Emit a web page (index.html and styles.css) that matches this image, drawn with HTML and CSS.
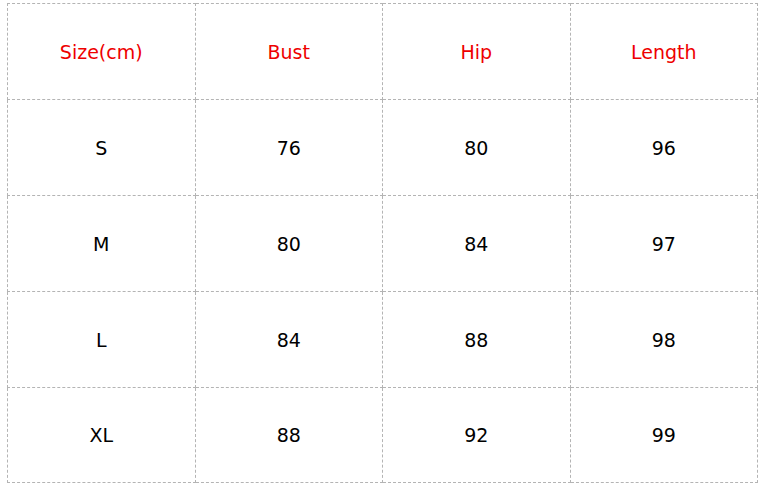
FILE: index.html
```html
<!DOCTYPE html>
<html>
<head>
<meta charset="utf-8">
<link rel="stylesheet" href="styles.css">
</head>
<body>
<table class="size-table">
  <tr class="head">
    <td>Size(cm)</td><td>Bust</td><td>Hip</td><td>Length</td>
  </tr>
  <tr><td>S</td><td>76</td><td>80</td><td>96</td></tr>
  <tr><td>M</td><td>80</td><td>84</td><td>97</td></tr>
  <tr><td>L</td><td>84</td><td>88</td><td>98</td></tr>
  <tr><td>XL</td><td>88</td><td>92</td><td>99</td></tr>
</table>
</body>
</html>
```
FILE: styles.css
```css
html, body {
  margin: 0;
  background: #fff;
}
body {
  padding: 3px 7px;
  font-family: Verdana, "DejaVu Sans", sans-serif;
}
.size-table {
  border-collapse: collapse;
  width: 751px;
  table-layout: fixed;
}
.size-table td {
  border: 1px dashed #b4b4b4;
  height: 95px;
  padding: 0;
  text-align: center;
  vertical-align: middle;
  font-size: 19px;
  color: #000;
}
.size-table tr.head td {
  color: #ee0000;
}
.size-table tr:last-child td {
  height: 94px;
}
```
